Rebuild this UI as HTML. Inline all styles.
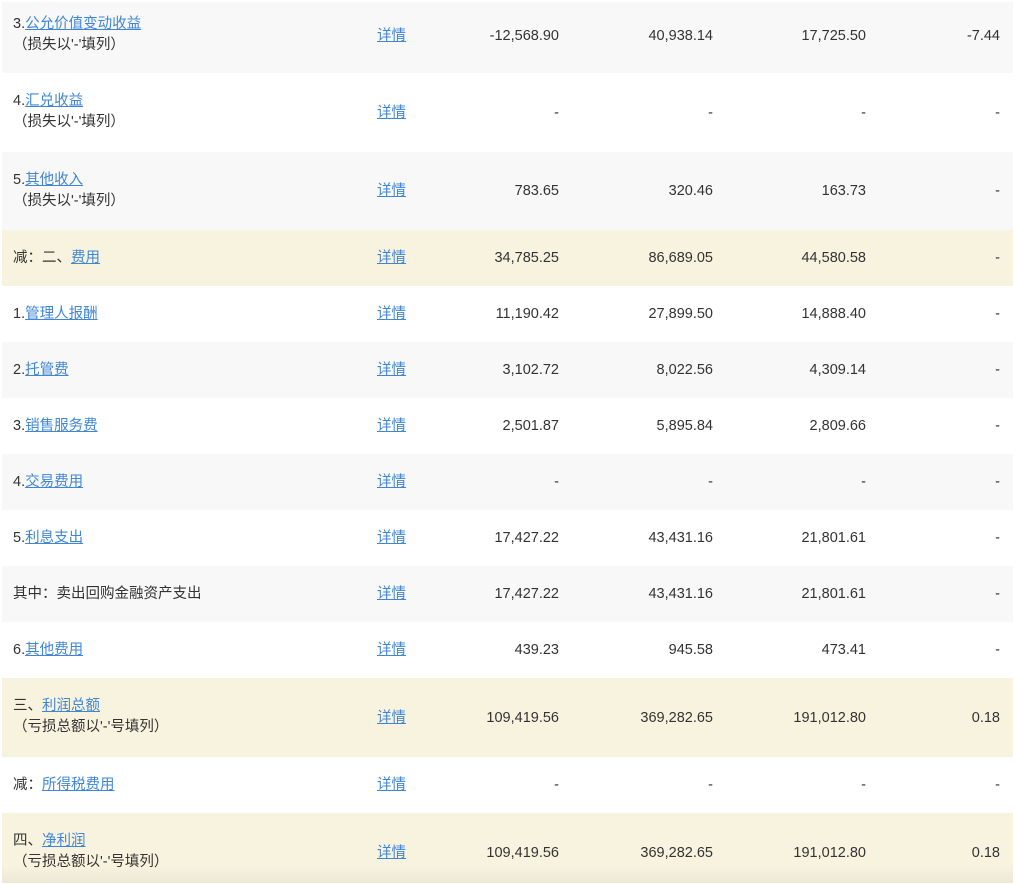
<!DOCTYPE html>
<html><head><meta charset="utf-8"><style>
body{margin:0;width:1015px;height:885px;overflow:hidden;background:#fff;font-family:"Liberation Sans","Noto Sans CJK SC",sans-serif;font-size:14.5px;color:#333}
.r{position:absolute;left:2px;width:1011px;}
.g{background:#f8f8f8}.y{background:#f8f3df}.w{background:#fff}
.l{position:absolute;left:11px;line-height:21px;margin-top:1px}
.d{position:absolute;left:375px;margin-top:-2px}
.n{position:absolute;text-align:right;width:200px;margin-top:2px}
.c1{left:357px}.c2{left:511px}.c3{left:664px}.c4{left:798px}
a{color:#3f86d8;text-decoration:underline}
</style></head><body>
<div class="r g" style="top:2px;height:71px">
<div class="l" style="top:11px">3.<a>公允价值变动收益</a><br>（损失以'-'填列）</div>
<div class="d" style="top:24px"><a>详情</a></div>
<div class="n c1" style="top:24px">-12,568.90</div><div class="n c2" style="top:24px">40,938.14</div><div class="n c3" style="top:24px">17,725.50</div><div class="n c4" style="top:24px">-7.44</div></div>
<div class="r w" style="top:73px;height:79px">
<div class="l" style="top:17px">4.<a>汇兑收益</a><br>（损失以'-'填列）</div>
<div class="d" style="top:30px"><a>详情</a></div>
<div class="n c1" style="top:30px">-</div><div class="n c2" style="top:30px">-</div><div class="n c3" style="top:30px">-</div><div class="n c4" style="top:30px">-</div></div>
<div class="r g" style="top:152px;height:78px">
<div class="l" style="top:17px">5.<a>其他收入</a><br>（损失以'-'填列）</div>
<div class="d" style="top:29px"><a>详情</a></div>
<div class="n c1" style="top:29px">783.65</div><div class="n c2" style="top:29px">320.46</div><div class="n c3" style="top:29px">163.73</div><div class="n c4" style="top:29px">-</div></div>
<div class="r y" style="top:230px;height:56px">
<div class="l" style="top:17px">减：二、<a>费用</a></div>
<div class="d" style="top:18px"><a>详情</a></div>
<div class="n c1" style="top:18px">34,785.25</div><div class="n c2" style="top:18px">86,689.05</div><div class="n c3" style="top:18px">44,580.58</div><div class="n c4" style="top:18px">-</div></div>
<div class="r w" style="top:286px;height:56px">
<div class="l" style="top:17px">1.<a>管理人报酬</a></div><div class="d" style="top:18px"><a>详情</a></div>
<div class="n c1" style="top:18px">11,190.42</div><div class="n c2" style="top:18px">27,899.50</div><div class="n c3" style="top:18px">14,888.40</div><div class="n c4" style="top:18px">-</div></div>
<div class="r g" style="top:342px;height:56px">
<div class="l" style="top:17px">2.<a>托管费</a></div><div class="d" style="top:18px"><a>详情</a></div>
<div class="n c1" style="top:18px">3,102.72</div><div class="n c2" style="top:18px">8,022.56</div><div class="n c3" style="top:18px">4,309.14</div><div class="n c4" style="top:18px">-</div></div>
<div class="r w" style="top:398px;height:56px">
<div class="l" style="top:17px">3.<a>销售服务费</a></div><div class="d" style="top:18px"><a>详情</a></div>
<div class="n c1" style="top:18px">2,501.87</div><div class="n c2" style="top:18px">5,895.84</div><div class="n c3" style="top:18px">2,809.66</div><div class="n c4" style="top:18px">-</div></div>
<div class="r g" style="top:454px;height:56px">
<div class="l" style="top:17px">4.<a>交易费用</a></div><div class="d" style="top:18px"><a>详情</a></div>
<div class="n c1" style="top:18px">-</div><div class="n c2" style="top:18px">-</div><div class="n c3" style="top:18px">-</div><div class="n c4" style="top:18px">-</div></div>
<div class="r w" style="top:510px;height:56px">
<div class="l" style="top:17px">5.<a>利息支出</a></div><div class="d" style="top:18px"><a>详情</a></div>
<div class="n c1" style="top:18px">17,427.22</div><div class="n c2" style="top:18px">43,431.16</div><div class="n c3" style="top:18px">21,801.61</div><div class="n c4" style="top:18px">-</div></div>
<div class="r g" style="top:566px;height:56px">
<div class="l" style="top:17px">其中：卖出回购金融资产支出</div><div class="d" style="top:18px"><a>详情</a></div>
<div class="n c1" style="top:18px">17,427.22</div><div class="n c2" style="top:18px">43,431.16</div><div class="n c3" style="top:18px">21,801.61</div><div class="n c4" style="top:18px">-</div></div>
<div class="r w" style="top:622px;height:56px">
<div class="l" style="top:17px">6.<a>其他费用</a></div><div class="d" style="top:18px"><a>详情</a></div>
<div class="n c1" style="top:18px">439.23</div><div class="n c2" style="top:18px">945.58</div><div class="n c3" style="top:18px">473.41</div><div class="n c4" style="top:18px">-</div></div>
<div class="r y" style="top:678px;height:79px">
<div class="l" style="top:17px">三、<a>利润总额</a><br>（亏损总额以'-'号填列）</div>
<div class="d" style="top:30px"><a>详情</a></div>
<div class="n c1" style="top:30px">109,419.56</div><div class="n c2" style="top:30px">369,282.65</div><div class="n c3" style="top:30px">191,012.80</div><div class="n c4" style="top:30px">0.18</div></div>
<div class="r w" style="top:757px;height:56px">
<div class="l" style="top:17px">减：<a>所得税费用</a></div><div class="d" style="top:18px"><a>详情</a></div>
<div class="n c1" style="top:18px">-</div><div class="n c2" style="top:18px">-</div><div class="n c3" style="top:18px">-</div><div class="n c4" style="top:18px">-</div></div>
<div class="r y" style="top:813px;height:70px;background:linear-gradient(#f8f3df 75%,#ece8d6)">
<div class="l" style="top:17px">四、<a>净利润</a><br>（亏损总额以'-'号填列）</div>
<div class="d" style="top:30px"><a>详情</a></div>
<div class="n c1" style="top:30px">109,419.56</div><div class="n c2" style="top:30px">369,282.65</div><div class="n c3" style="top:30px">191,012.80</div><div class="n c4" style="top:30px">0.18</div></div>
</body></html>
